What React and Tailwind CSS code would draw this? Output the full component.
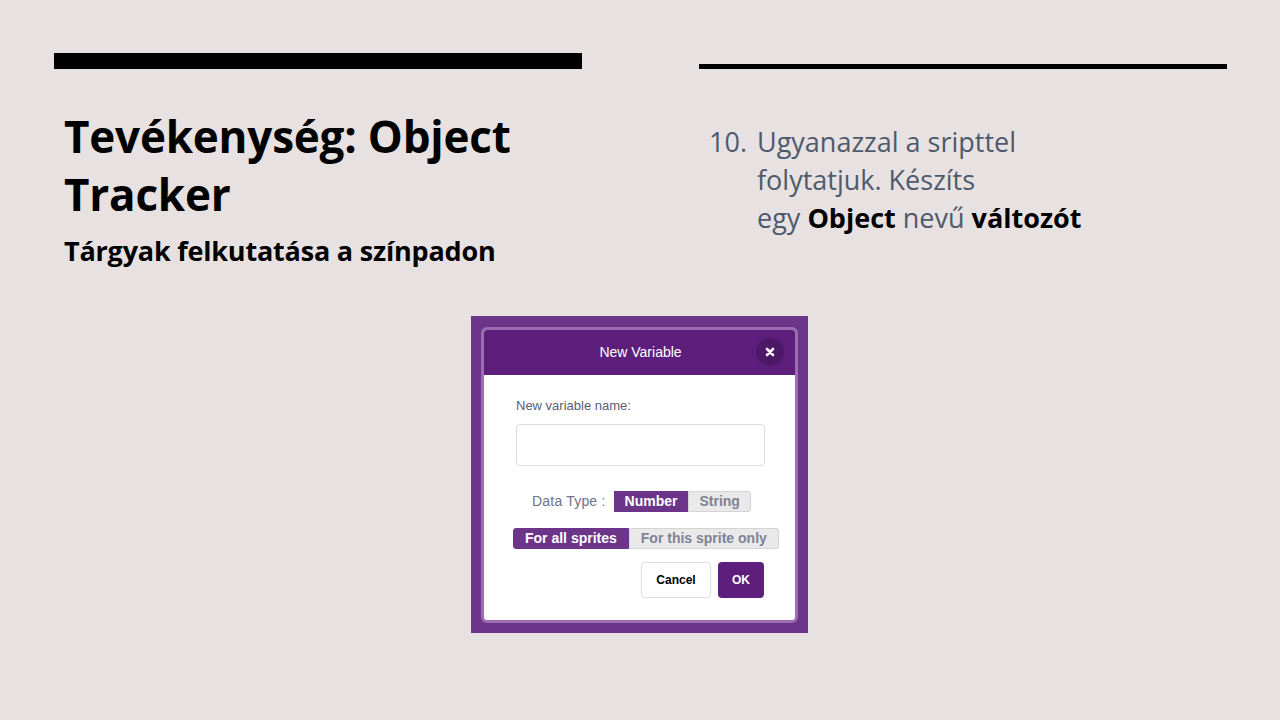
import React from 'react';

function App() {
  return (
    <div className="w-[1280px] h-[720px] bg-[#e7e1e1] overflow-hidden" style={{ fontFamily: '"Open Sans", "Noto Sans", sans-serif' }}>
      <div className="h-[316px] grid grid-cols-[528px_528px] gap-x-[117px] pl-[54px]">
        <div className="pt-[53px]">
          <div className="h-[16px] bg-black" />
          <h1 className="mt-[38px] pl-[10px] text-[44px] leading-[58px] font-bold tracking-[-0.2px] text-black">
            Tevékenység: Object Tracker
          </h1>
          <p className="mt-[8px] pl-[10px] text-[27px] font-bold tracking-[-0.2px] text-black">Tárgyak felkutatása a színpadon</p>
        </div>
        <div className="pt-[64px]">
          <div className="h-[5px] bg-black" />
          <div className="mt-[54px] pl-[10px] flex text-[27px] leading-[38px] text-[#4e5a6c]">
            <span className="w-[48px] shrink-0">10.</span>
            <p className="whitespace-nowrap">
              Ugyanazzal a sripttel
              <br />
              folytatjuk. Készíts
              <br />
              egy <b className="text-black">Object</b> nevű <b className="text-black">változót</b>
            </p>
          </div>
        </div>
      </div>
      <div className="ml-[471px] w-[337px] h-[317px] bg-[#6c3589] pt-[11px] px-[10px]">
        <VariableDialog />
      </div>
    </div>
  );
}

export default App;

const VariableDialog = () => {
  return (
    <div
      className="h-[296px] rounded-[6px] border-[3px] border-[#9c6db3] bg-white overflow-hidden"
      style={{ fontFamily: '"Liberation Sans", Arial, sans-serif' }}
    >
      <div className="h-[45px] bg-[#5e1f7c] relative flex items-center justify-center">
        <span className="pl-[2px] text-white text-[14px]">New Variable</span>
        <div className="absolute right-[11px] top-[8px] w-[28px] h-[28px] rounded-full bg-[#4e1868] flex items-center justify-center">
          <svg width="10" height="10" viewBox="0 0 10 10">
            <path d="M2 2L8 8M8 2L2 8" stroke="white" strokeWidth="2.6" strokeLinecap="round" />
          </svg>
        </div>
      </div>
      <div className="pl-[32px] pr-[30px] pt-[21px]">
        <p className="text-[13px] text-[#575e75]">New variable name:</p>
        <div className="mt-[8px] w-[249px] h-[42px] rounded-[4px] border border-[#dcdcdc]" />
        <div className="mt-[25px] flex items-center pl-[16px]">
          <span className="text-[14px] text-[#6e7387] mr-[8px] tracking-[0.2px]">Data Type :</span>
          <Segment active>Number</Segment>
          <Segment>String</Segment>
        </div>
        <div className="mt-[16px] -ml-[3px] flex">
          <Segment active wide>For all sprites</Segment>
          <Segment wide>For this sprite only</Segment>
        </div>
        <div className="mt-[13px] flex justify-end gap-[7px] pr-[1px]">
          <button className="w-[70px] h-[36px] rounded-[4px] border border-[#dedede] bg-white text-[12px] font-bold text-black">
            Cancel
          </button>
          <button className="w-[46px] h-[36px] rounded-[4px] bg-[#5e1f7c] text-[12px] font-bold text-white">OK</button>
        </div>
      </div>
    </div>
  );
};

const Segment = (props) => {
  const { active, wide } = props;
  return (
    <span
      className={`${wide ? 'px-[11px]' : 'px-[10px]'} h-[21px] shrink-0 whitespace-nowrap flex items-center text-[14px] font-bold border first:rounded-l-[3px] last:rounded-r-[3px] ${
        active ? 'bg-[#6c3589] border-[#6c3589] text-white' : 'bg-[#e9e9e9] border-[#d4d4d4] text-[#7e8296]'
      }`}
    >
      {props.children}
    </span>
  );
};
